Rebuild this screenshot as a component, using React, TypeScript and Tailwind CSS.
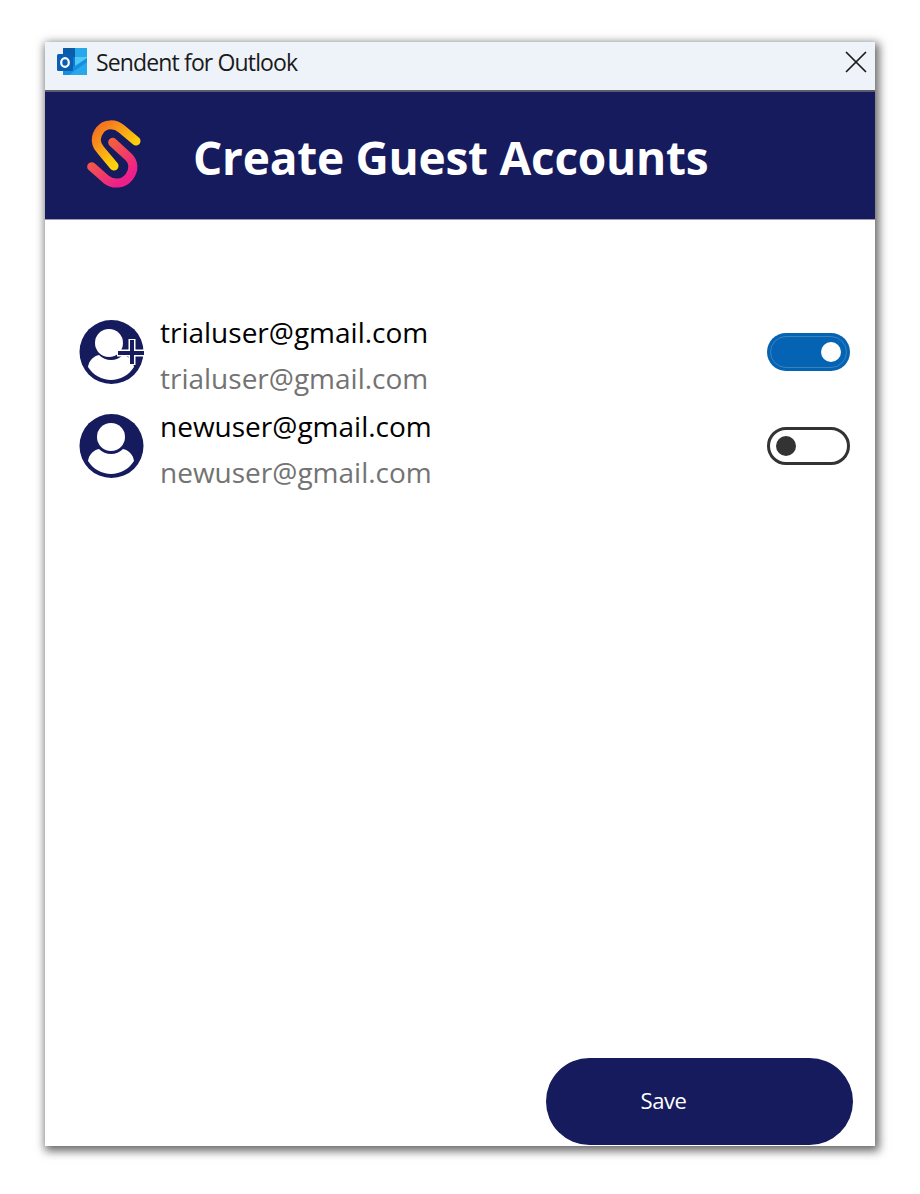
import React from "react";
import { X } from "lucide-react";

const font = { fontFamily: '"Open Sans", "Noto Sans", sans-serif' };

function OutlookIcon() {
  return (
    <svg width="30" height="30" viewBox="0 0 30 30" className="shrink-0">
      <rect x="6" y="1" width="24" height="27" rx="1.5" fill="#0f6cbd" />
      <rect x="6" y="1" width="12" height="9" fill="#0a5ca8" />
      <rect x="18" y="1" width="12" height="9" fill="#28a8ea" />
      <rect x="18" y="10" width="12" height="9" fill="#50c8f5" />
      <rect x="6" y="10" width="12" height="9" fill="#0f78d4" />
      <path d="M6 28 V19 L18 19 L30 11 V26.5 A1.5 1.5 0 0 1 28.5 28 Z" fill="#1490df" />
      <path d="M12 28 L30 15 V26.5 A1.5 1.5 0 0 1 28.5 28 Z" fill="#28a8ea" />
      <rect x="0" y="7" width="16" height="17" rx="1.5" fill="#0a5fb4" />
      <ellipse cx="8" cy="15.5" rx="3.8" ry="4.4" fill="none" stroke="#fff" strokeWidth="2.2" />
    </svg>
  );
}

function SendentLogo() {
  return (
    <svg width="57" height="72" viewBox="165 265 171 216" className="shrink-0 mb-[3px]">
      <defs>
        <linearGradient id="orangeGrad" gradientUnits="userSpaceOnUse" x1="200" y1="300" x2="290" y2="400">
          <stop offset="0" stopColor="#f47421" />
          <stop offset="0.85" stopColor="#ffd40a" />
        </linearGradient>
        <linearGradient id="pinkGrad" gradientUnits="userSpaceOnUse" x1="190" y1="340" x2="280" y2="450">
          <stop offset="0" stopColor="#f4702a" />
          <stop offset="1" stopColor="#ee1f8b" />
        </linearGradient>
      </defs>
      <path
        d="M318 334 L275 298 C255 281 225 281 210 301 C192 324 198 346 212 361 L252 409"
        fill="none"
        stroke="url(#orangeGrad)"
        strokeWidth="27"
        strokeLinecap="round"
      />
      <path
        d="M185 411 L228 449 C250 466 280 464 298 441 C315 418 310 396 295 381 L248 338"
        fill="none"
        stroke="url(#pinkGrad)"
        strokeWidth="27"
        strokeLinecap="round"
      />
    </svg>
  );
}

function PersonIcon({ plus }: { plus?: boolean }) {
  return (
    <svg width="66" height="65" viewBox="0 0 66 65" className="shrink-0">
      <circle cx="32.5" cy="32" r="32" fill="#161b5e" />
      <path d="M9 47 C10 40 15 36 20 35 L44 35 C49 36 54 40 55 47 C50 55 41 60 32 60 C23 60 14 55 9 47 Z" fill="#fff" />
      <circle cx="32" cy="23" r="17" fill="#161b5e" />
      <circle cx={plus ? 30 : 32} cy="23" r="14" fill="#fff" />
      {plus && (
        <g>
          <path d="M38 33 H65 M53 19 V45" stroke="#fff" strokeWidth="7" />
          <path d="M39 33 H65 M53 20 V44" stroke="#161b5e" strokeWidth="4" />
        </g>
      )}
    </svg>
  );
}

function Toggle({ on }: { on?: boolean }) {
  if (on) {
    return (
      <div className="w-[83px] h-[38px] rounded-full bg-[#0563b3] flex items-center justify-end pr-[9px] relative">
        <div className="absolute inset-[3px] rounded-full border border-[#3d80bf]" />
        <div className="w-[20px] h-[20px] rounded-full bg-white" />
      </div>
    );
  }
  return (
    <div className="w-[83px] h-[38px] rounded-full bg-white border-[3px] border-[#333333] flex items-center pl-[6px]">
      <div className="w-[20px] h-[20px] rounded-full bg-[#333333]" />
    </div>
  );
}

function GuestRow({ email, plus, on }: { email: string; plus?: boolean; on?: boolean }) {
  return (
    <div className="h-[94px] flex items-start pl-[34px] pr-[25px]">
      <div className="mt-[6px]">
        <PersonIcon plus={plus} />
      </div>
      <div className="ml-[15px] flex-1 -mt-[1px]">
        <div className="text-[28px] leading-[38px] text-black">{email}</div>
        <div className="mt-[8px] text-[28px] leading-[38px] text-[#737373]">{email}</div>
      </div>
      <div className="mt-[19px]">
        <Toggle on={on} />
      </div>
    </div>
  );
}

export default function App() {
  return (
    <div className="w-[920px] h-[1194px] bg-white pt-[42px] pl-[45px]" style={font}>
      <div className="w-[830px] h-[1104px] bg-white flex flex-col shadow-[2px_3px_9px_2px_rgba(0,0,0,0.6)]">
        <div className="h-[50px] bg-[#eef3f9] border-b-2 border-[#5c5c6e] flex items-center pl-[12px] pb-[8px]">
          <OutlookIcon />
          <span className="ml-[9px] text-[23px] text-[#1a1a1a] tracking-[-0.86px] flex-1">Sendent for Outlook</span>
          <X size={38} strokeWidth={1.1} color="#1a1a1a" />
        </div>
        <div className="h-[128px] bg-[#161b5e] border-b border-[#9a9ab0] flex items-center pl-[40px]">
          <SendentLogo />
          <h1 className="ml-[51px] mt-[3px] text-[46px] font-bold text-white tracking-[-0.25px]">Create Guest Accounts</h1>
        </div>
        <div className="flex-1 flex flex-col pt-[94px]">
          <GuestRow email="trialuser@gmail.com" plus on />
          <GuestRow email="newuser@gmail.com" />
          <div className="flex-1" />
          <div className="flex justify-end pr-[22px] pb-[1px]">
            <button className="w-[307px] h-[87px] rounded-[44px] bg-[#161b5e] text-white text-[22px] tracking-[-0.4px] pr-[72px] pb-[2px]">
              Save
            </button>
          </div>
        </div>
      </div>
    </div>
  );
}
